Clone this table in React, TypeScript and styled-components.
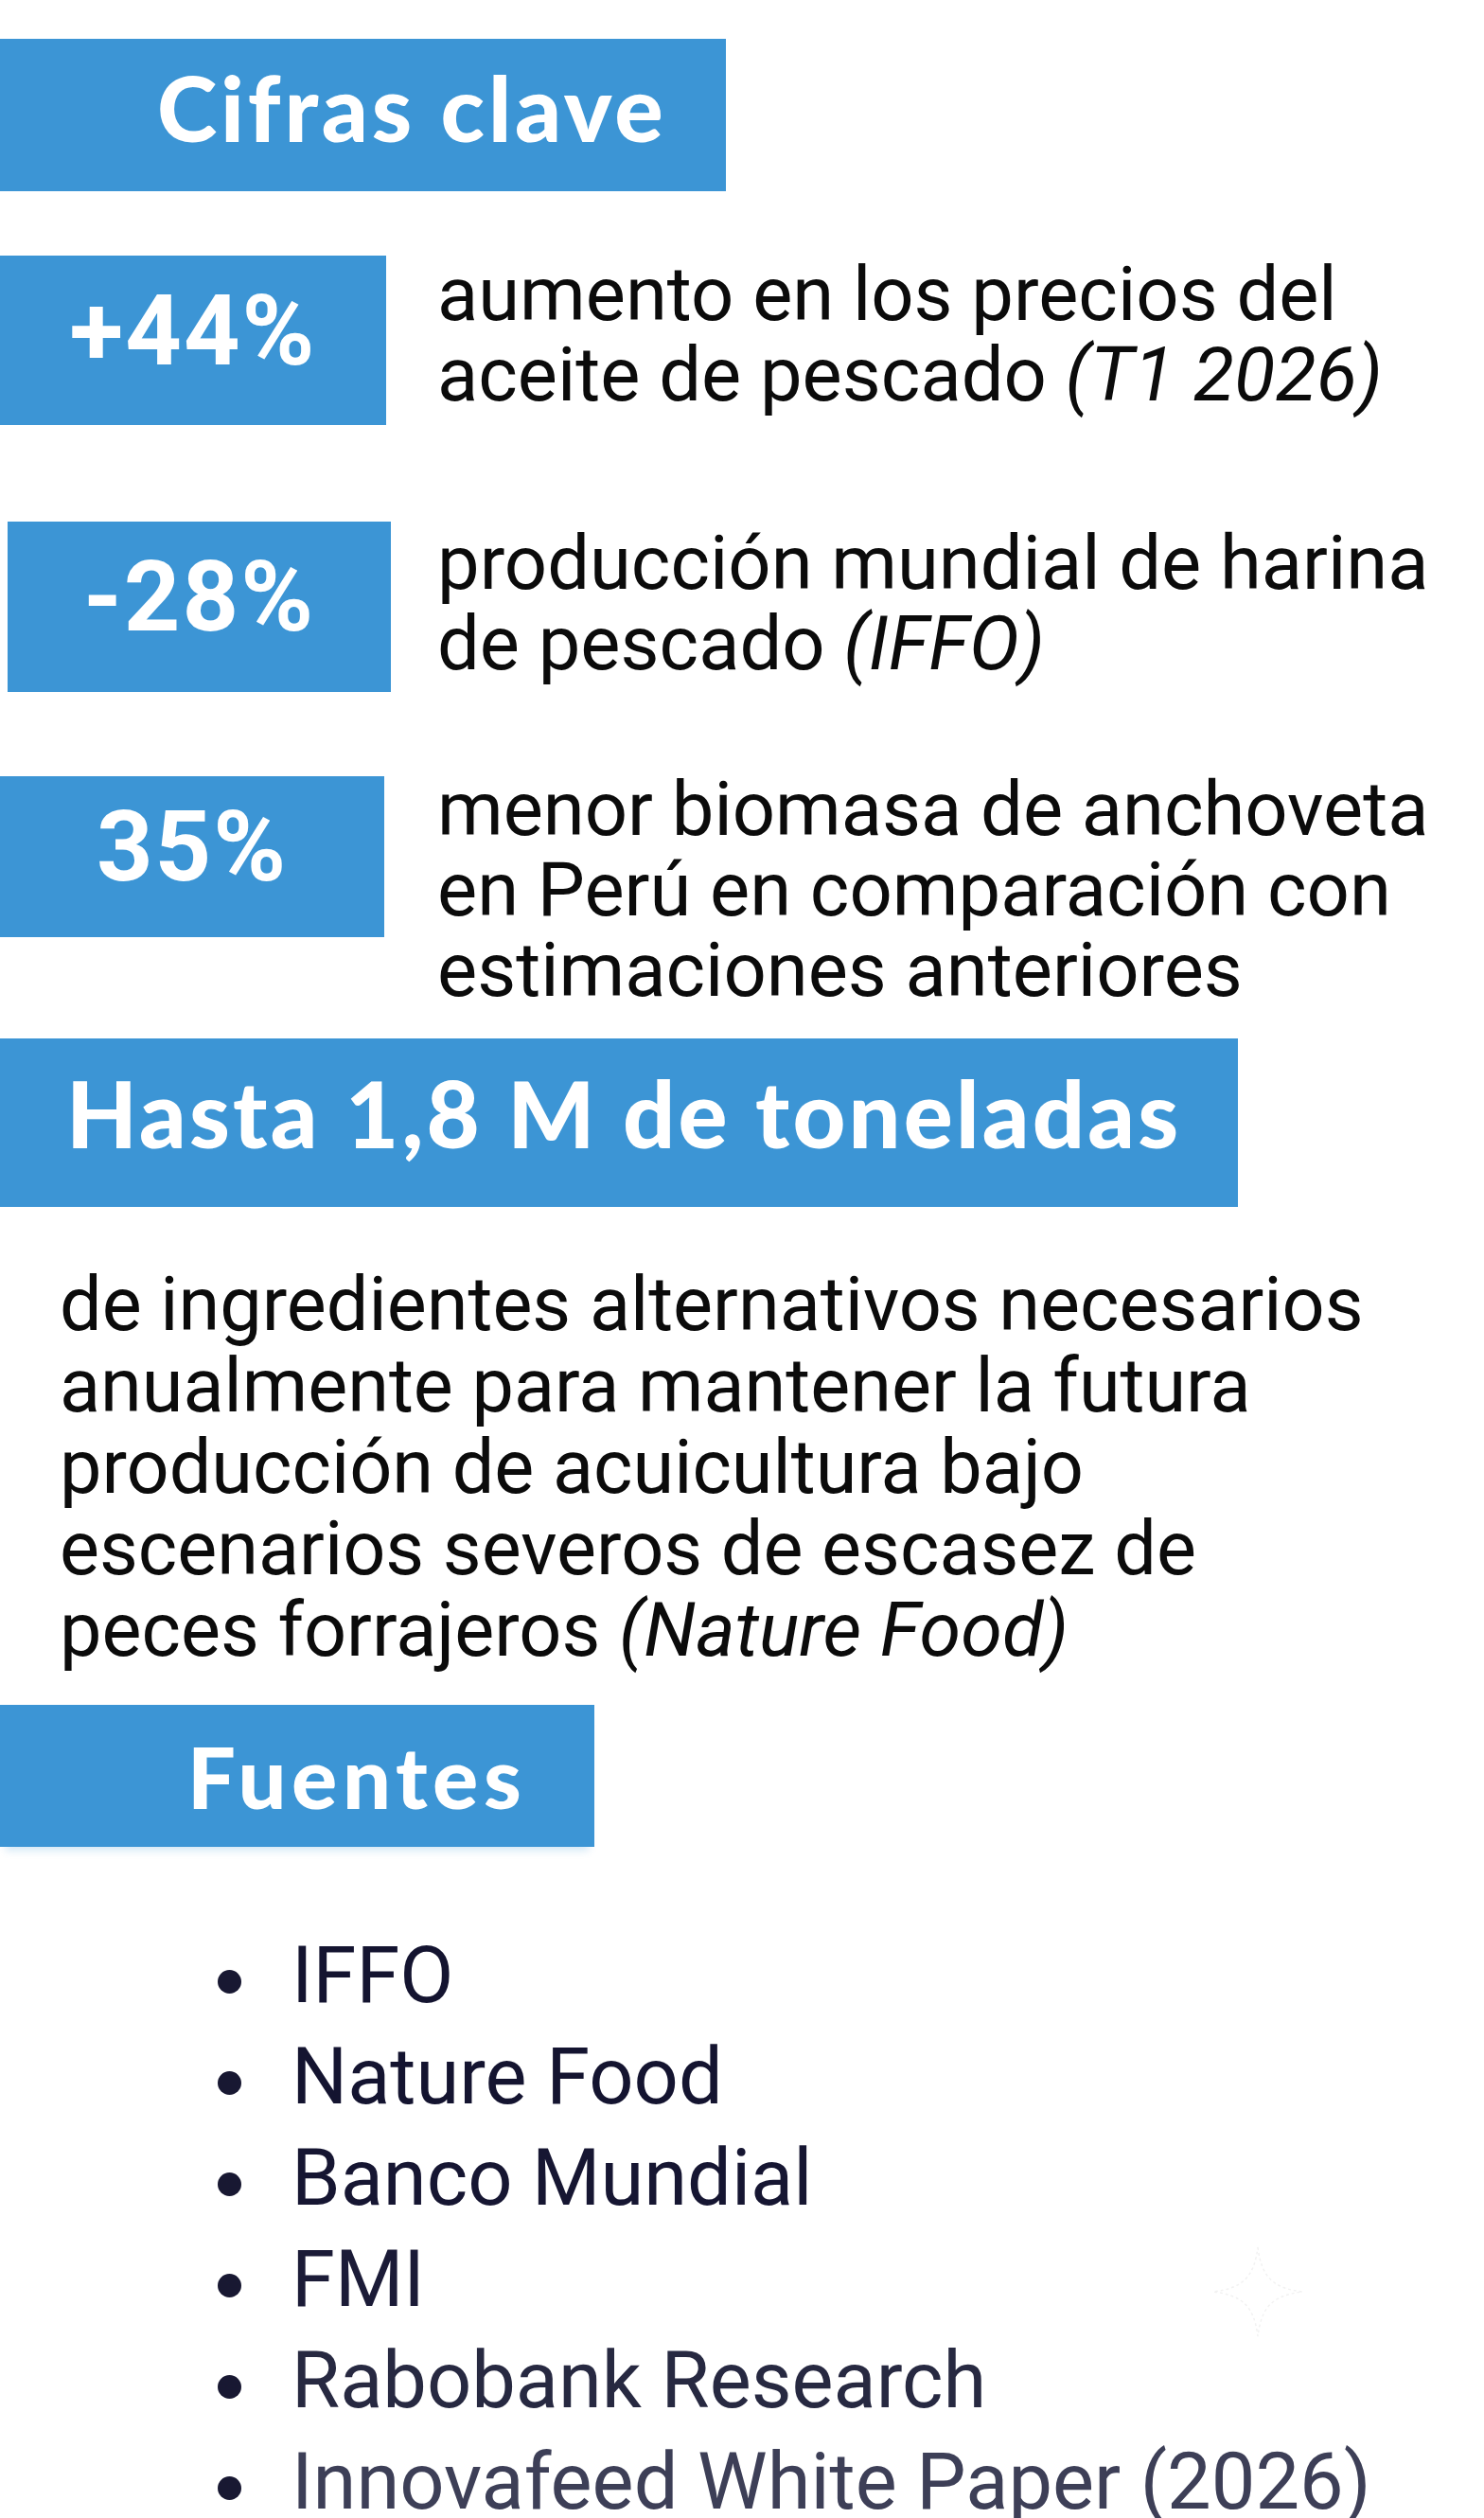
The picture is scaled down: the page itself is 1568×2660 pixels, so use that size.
import React from 'react';
import styled, { createGlobalStyle } from 'styled-components';

const Global = createGlobalStyle`
  html, body { margin: 0; padding: 0; background: #ffffff; }
  body { font-family: Roboto, "Liberation Sans", Arial, sans-serif; }
  * { box-sizing: border-box; }
`;

const BLUE = '#3c95d5';

const Page = styled.main`
  position: relative;
  width: 1568px;
  min-height: 2660px;
  padding-top: 41px;
  overflow: hidden;
  background: #ffffff;
`;

const Banner = styled.h2<{ $width: number; $height: number; $padLeft: number; $size: number; $mt: number; $lift: number; $spacing: number; $shadow?: boolean }>`
  margin: ${(p) => p.$mt}px 0 0 0;
  width: ${(p) => p.$width}px;
  height: ${(p) => p.$height}px;
  padding-left: ${(p) => p.$padLeft}px;
  padding-bottom: ${(p) => p.$lift}px;
  background: ${BLUE};
  color: #ffffff;
  display: flex;
  align-items: center;
  font-family: Lato, "Open Sans", "DejaVu Sans", sans-serif;
  font-weight: 900;
  font-size: ${(p) => p.$size}px;
  letter-spacing: ${(p) => p.$spacing}px;
  line-height: 1;
  white-space: nowrap;
  box-shadow: ${(p) => (p.$shadow ? '0 10px 8px -6px rgba(60,149,213,0.22)' : 'none')};
`;

const StatRow = styled.section<{ $mt: number }>`
  margin-top: ${(p) => p.$mt}px;
  display: grid;
  grid-template-columns: 462px 1fr;
  align-items: start;
`;

const Badge = styled.div<{ $width: number; $height: number; $left: number }>`
  margin-left: ${(p) => p.$left}px;
  width: ${(p) => p.$width}px;
  height: ${(p) => p.$height}px;
  background: ${BLUE};
  color: #ffffff;
  display: flex;
  align-items: center;
  justify-content: center;
  padding-bottom: 20px;
  font-family: Roboto, "Liberation Sans", sans-serif;
  font-weight: 700;
  font-size: 104px;
  letter-spacing: 2px;
  line-height: 1;
`;

const StatText = styled.p<{ $shift: number }>`
  margin: ${(p) => p.$shift}px 0 0 0;
  font-family: Roboto, "Liberation Sans", sans-serif;
  font-weight: 400;
  font-size: 79.5px;
  line-height: 85px;
  color: #0b0b0b;
  white-space: nowrap;
  em { font-style: italic; }
`;

const Paragraph = styled.p`
  margin: 60px 0 0 0;
  padding-left: 63px;
  font-family: Roboto, "Liberation Sans", sans-serif;
  font-weight: 400;
  font-size: 79.2px;
  line-height: 86px;
  color: #0b0b0b;
  white-space: nowrap;
  em { font-style: italic; }
`;

const SourceList = styled.ul`
  margin: 82px 0 0 0;
  padding: 0;
  list-style: none;
`;

const SourceItem = styled.li<{ $color: string }>`
  display: flex;
  align-items: flex-start;
  padding-left: 230px;
  font-family: Roboto, "Liberation Sans", sans-serif;
  font-weight: 400;
  font-size: 83px;
  line-height: 107px;
  color: ${(p) => p.$color};
  white-space: nowrap;
`;

const Dot = styled.span`
  flex: none;
  width: 25px;
  height: 25px;
  margin-top: 48px;
  margin-right: 53px;
  border-radius: 50%;
  background: #181832;
`;

const Sparkle = styled.svg`
  position: absolute;
  left: 1280px;
  top: 2372px;
  width: 98px;
  height: 98px;
  pointer-events: none;
`;

const sources: { name: string; color: string }[] = [
  { name: 'IFFO', color: '#141430' },
  { name: 'Nature Food', color: '#141430' },
  { name: 'Banco Mundial', color: '#161632' },
  { name: 'FMI', color: '#1b1b37' },
  { name: 'Rabobank Research', color: '#272941' },
  { name: 'Innovafeed White Paper (2026)', color: '#3d3f57' },
];

export default function App() {
  return (
    <>
      <Global />
      <Page>
        <Banner $width={767} $height={161} $padLeft={166} $size={96} $mt={0} $lift={18} $spacing={3.8}>
          Cifras clave
        </Banner>

        <StatRow $mt={68}>
          <Badge $width={408} $height={179} $left={0}>+44%</Badge>
          <StatText $shift={-2}>
            aumento en los precios del
            <br />
            aceite de pescado <em>(T1 2026)</em>
          </StatText>
        </StatRow>

        <StatRow $mt={102}>
          <Badge $width={405} $height={180} $left={8}>-28%</Badge>
          <StatText $shift={1}>
            producción mundial de harina
            <br />
            de pescado <em>(IFFO)</em>
          </StatText>
        </StatRow>

        <StatRow $mt={89}>
          <Badge $width={406} $height={170} $left={0}>35%</Badge>
          <StatText $shift={-8}>
            menor biomasa de anchoveta
            <br />
            en Perú en comparación con
            <br />
            estimaciones anteriores
          </StatText>
        </StatRow>

        <Banner $width={1308} $height={178} $padLeft={70} $size={97} $mt={30} $lift={22} $spacing={3.2}>
          Hasta 1,8 M de toneladas
        </Banner>

        <Paragraph>
          de ingredientes alternativos necesarios
          <br />
          anualmente para mantener la futura
          <br />
          producción de acuicultura bajo
          <br />
          escenarios severos de escasez de
          <br />
          peces forrajeros <em>(Nature Food)</em>
        </Paragraph>

        <Banner $width={628} $height={150} $padLeft={198} $size={90} $mt={36} $lift={0} $spacing={5.6} $shadow>
          Fuentes
        </Banner>

        <SourceList>
          {sources.map((s) => (
            <SourceItem key={s.name} $color={s.color}>
              <Dot />
              {s.name}
            </SourceItem>
          ))}
        </SourceList>

        <Sparkle viewBox="0 0 100 100" aria-hidden="true">
          <path
            d="M50 2 C54 34 66 46 98 50 C66 54 54 66 50 98 C46 66 34 54 2 50 C34 46 46 34 50 2 Z"
            fill="none"
            stroke="#f2f2f2"
            strokeWidth="1.5"
            strokeDasharray="3 3"
          />
        </Sparkle>
      </Page>
    </>
  );
}
